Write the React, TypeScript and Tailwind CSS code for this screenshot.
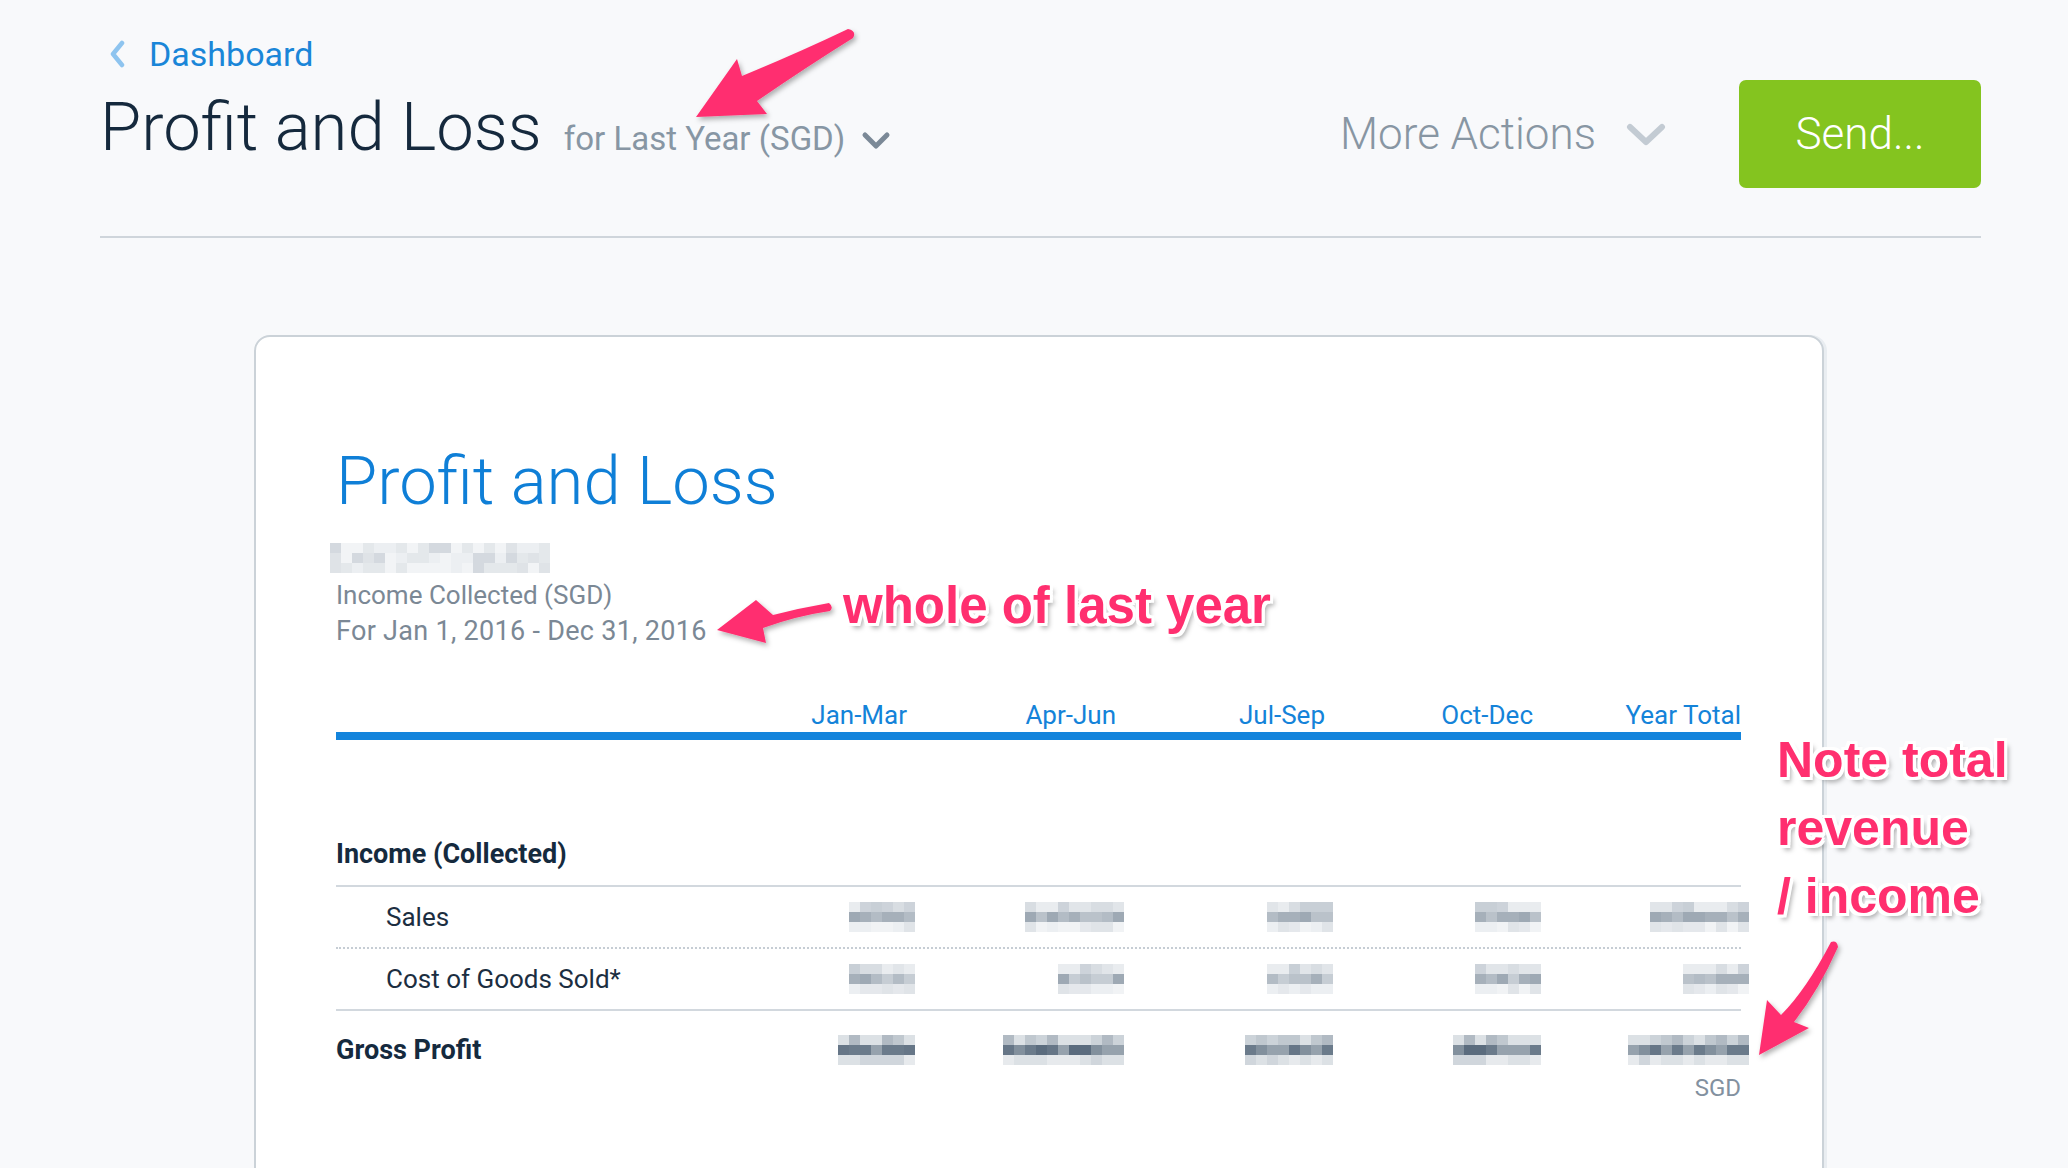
import React from 'react';

type Cell = { tone: 'light' | 'dark'; cols: number };

const TOP_LIGHT = ['bg-[#e1e5e9]', 'bg-[#cdd3da]', 'bg-[#d8dde2]', 'bg-[#e9ecef]', 'bg-[#c8cfd6]'];
const MID_LIGHT = ['bg-[#bac2ca]', 'bg-[#a6b0ba]', 'bg-[#9ea9b4]', 'bg-[#b3bcc5]', 'bg-[#c6cdd4]'];
const BOT_LIGHT = ['bg-[#eceff2]', 'bg-[#e0e4e8]', 'bg-[#f1f3f5]', 'bg-[#e5e8ec]'];
const TOP_DARK = ['bg-[#c0c8cf]', 'bg-[#b1bac3]', 'bg-[#ccd3d9]', 'bg-[#dce1e5]'];
const MID_DARK = ['bg-[#6b7b8b]', 'bg-[#5b6c7e]', 'bg-[#82909d]', 'bg-[#667687]', 'bg-[#96a2ad]'];
const BOT_DARK = ['bg-[#dce1e5]', 'bg-[#d0d6dc]', 'bg-[#e7eaed]'];
const NAME_ROW = ['bg-[#eceff2]', 'bg-[#dfe3e7]', 'bg-[#d4d9df]', 'bg-[#f2f4f6]', 'bg-[#e4e8eb]'];

// pseudo random so the pixelated blocks look scrambled but stay the same every run
const pick = (list: string[], seed: number) => list[Math.abs(Math.floor(Math.sin(seed * 12.9898) * 43758.5453)) % list.length];

function Pixelated({ cols, tone, seed }: Cell & { seed: number }) {
  const rows = tone === 'dark' ? [TOP_DARK, MID_DARK, BOT_DARK] : [TOP_LIGHT, MID_LIGHT, BOT_LIGHT];
  return (
    <div className="inline-flex flex-col mr-[-8px]">
      {rows.map((palette, r) => (
        <div key={r} className="flex">
          {Array.from({ length: cols }).map((_, c) => (
            <div key={c} className={`w-[11px] h-[10px] ${pick(palette, seed * 31 + r * 7 + c + 1)}`} />
          ))}
        </div>
      ))}
    </div>
  );
}

function CompanyName() {
  return (
    <div className="flex flex-col ml-[-6px]">
      {[0, 1, 2].map((r) => (
        <div key={r} className="flex">
          {Array.from({ length: 20 }).map((_, c) => (
            <div key={c} className={`w-[11px] h-[10px] ${pick(NAME_ROW, r * 40 + c + 3)}`} />
          ))}
        </div>
      ))}
    </div>
  );
}

const COLS = 'grid grid-cols-[362px_209px_209px_209px_208px_208px]';

const rows: { label: string; cells: number[]; tone: 'light' | 'dark' }[] = [
  { label: 'Sales', cells: [6, 9, 6, 6, 9], tone: 'light' },
  { label: 'Cost of Goods Sold*', cells: [6, 6, 6, 6, 6], tone: 'light' },
];

const annotation =
  'font-["Liberation_Sans",Arial,sans-serif] font-bold text-[#ff2f6f] [text-shadow:-3px_-3px_0_#fff,3px_-3px_0_#fff,-3px_3px_0_#fff,3px_3px_0_#fff,0_-3px_0_#fff,0_3px_0_#fff,-3px_0_0_#fff,3px_0_0_#fff,4px_5px_5px_rgba(0,0,0,0.35)]';

export default function App() {
  return (
    <div className='relative h-[1168px] w-[2068px] overflow-hidden bg-[#f8f9fb] font-["Roboto","Liberation_Sans",sans-serif]'>
      {/* Page header */}
      <div className="pl-[100px] pr-[87px]">
        <a className="flex items-center h-[32px] mt-[38px] text-[34px] leading-none text-[#1a86d8]">
          <svg width="17" height="28" viewBox="0 0 17 28" className="ml-[9px] mr-[23px]">
            <polyline points="13,3 4,14 13,25" fill="none" stroke="#8ec4ef" strokeWidth="4.5" strokeLinecap="round" strokeLinejoin="round" />
          </svg>
          Dashboard
        </a>

        <div className="flex items-start justify-between mt-[10px]">
          <div className="flex items-baseline mt-[14px]">
            <h1 className="text-[67px] leading-none font-light text-[#15293d]">Profit and Loss</h1>
            <span className="ml-[22px] text-[33px] leading-none text-[#8796a4]">for Last Year (SGD)</span>
            <svg width="30" height="19" viewBox="0 0 30 19" className="ml-[16px] mb-[3px]">
              <polyline points="4,4 15,15 26,4" fill="none" stroke="#7b8997" strokeWidth="5" strokeLinecap="round" strokeLinejoin="round" />
            </svg>
          </div>

          <div className="flex items-center h-[108px]">
            <span className="text-[44px] leading-none font-light text-[#8896a3]">More Actions</span>
            <svg width="41" height="23" viewBox="0 0 41 23" className="ml-[30px]">
              <polyline points="4,4 20,19 36,4" fill="none" stroke="#c3cbd3" strokeWidth="6" strokeLinecap="round" strokeLinejoin="round" />
            </svg>
            <button className="ml-[72px] w-[242px] h-[108px] rounded-[7px] bg-[#84c41f] text-white text-[44px] leading-none font-light flex items-center justify-center">
              Send...
            </button>
          </div>
        </div>

        <div className="mt-[48px] h-[2px] bg-[#cfd5db]" />
      </div>

      {/* Report card */}
      <div className="ml-[254px] mt-[97px] w-[1570px] h-[900px] rounded-[16px] border-2 border-[#cbd2d8] bg-white shadow-[3px_0_0_#e9edf1]">
        <div className="pt-[111px] pl-[80px] pr-[81px]">
          <h2 className="text-[67px] leading-none font-light text-[#0f7fd7]">Profit and Loss</h2>

          <div className="mt-[28px]">
            <CompanyName />
          </div>

          <div className="mt-[4px] text-[26px] leading-[36px] text-[#7b8895]">
            <p>Income Collected (SGD)</p>
            <p className="text-[27px] tracking-[0.3px]">For Jan 1, 2016 - Dec 31, 2016</p>
          </div>

          {/* Column headings */}
          <div className={`${COLS} mt-[51px] text-[26px] leading-[30px] text-[#1483d9] text-right`}>
            <div />
            <div>Jan-Mar</div>
            <div>Apr-Jun</div>
            <div>Jul-Sep</div>
            <div>Oct-Dec</div>
            <div>Year Total</div>
          </div>
          <div className="mt-[2px] h-[8px] bg-[#1384dc]" />

          {/* Income section */}
          <div className="mt-[99px] pb-[16px] border-b-2 border-[#d2d8de] text-[27px] leading-[30px] font-bold text-[#152a3e]">
            Income (Collected)
          </div>

          {rows.map((row, i) => (
            <div
              key={row.label}
              className={`${COLS} items-center h-[62px] ${i === 0 ? 'border-b-2 border-dotted border-[#c6cdd4]' : 'border-b-2 border-[#d2d8de]'}`}
            >
              <div className="pl-[50px] text-[26px] leading-[30px] text-[#1c2e41]">{row.label}</div>
              {row.cells.map((n, j) => (
                <div key={j} className="flex justify-end">
                  <Pixelated cols={n} tone={row.tone} seed={i * 10 + j + 1} />
                </div>
              ))}
            </div>
          ))}

          {/* Gross profit */}
          <div className={`${COLS} items-center mt-[24px]`}>
            <div className="text-[27px] leading-[30px] font-bold text-[#152a3e]">Gross Profit</div>
            {[7, 11, 8, 8, 11].map((n, j) => (
              <div key={j} className="flex justify-end">
                <Pixelated cols={n} tone="dark" seed={50 + j} />
              </div>
            ))}
          </div>
          <div className="mt-[8px] text-right text-[24px] leading-[30px] text-[#8391a0]">SGD</div>
        </div>
      </div>

      {/* Annotations drawn over the screenshot */}
      <svg className="absolute inset-0 pointer-events-none" width="2068" height="1168" viewBox="0 0 2068 1168">
        <defs>
          <filter id="arrowShadow" x="-20%" y="-20%" width="140%" height="140%">
            <feDropShadow dx="2" dy="3" stdDeviation="2.5" floodColor="#000" floodOpacity="0.3" />
          </filter>
        </defs>
        <g fill="#ff2f6f" filter="url(#arrowShadow)">
          <path d="M 848 29 Q 800 52 742 76 L 737 59 L 696 117 L 767 114 L 757 101 Q 808 66 853 38 Q 857 31 848 29 Z" />
          <path d="M 829 603 Q 800 608 773 615 L 756 600 L 717 630 L 766 643 L 763 628 Q 796 616 830 611 Q 834 607 829 603 Z" />
          <path d="M 1831 942 Q 1806 990 1781 1015 L 1767 1000 L 1759 1055 L 1809 1028 L 1794 1022 Q 1819 990 1838 947 Q 1837 940 1831 942 Z" />
        </g>
      </svg>

      <div className={`absolute left-[843px] top-[580px] leading-none text-[51px] ${annotation}`}>whole of last year</div>
      <div className={`absolute left-[1777px] top-[726px] leading-[68px] text-[50px] ${annotation}`}>
        Note total
        <br />
        revenue
        <br />/ income
      </div>
    </div>
  );
}
